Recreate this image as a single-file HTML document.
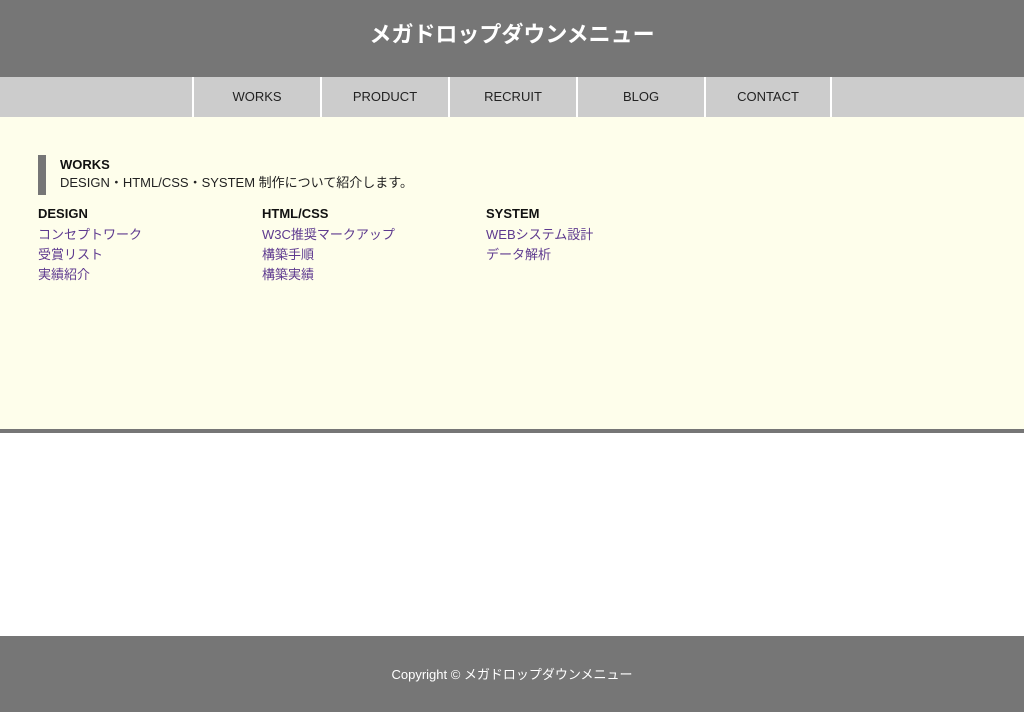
<!DOCTYPE html>
<html><head><meta charset="utf-8"><style>
*{margin:0;padding:0;box-sizing:border-box}
body{width:1024px;height:712px;background:#fff;font-family:"Liberation Sans","Noto Sans CJK JP",sans-serif;font-size:13px;color:#222;position:relative;overflow:hidden}
header{height:77px;background:#767676;color:#fff;text-align:center;font-size:22px;font-weight:bold;line-height:70px}
nav{height:40px;background:#ccc;position:relative}
nav a{position:absolute;top:0;width:128px;height:40px;line-height:40px;text-align:center;color:#222;text-decoration:none;font-size:13px;border-left:2px solid #fff}
nav a.last{border-right:2px solid #fff}
.panel{position:absolute;top:117px;left:0;width:1024px;height:316px;background:#fefeeb;border-bottom:4px solid #767676}
.lead{position:absolute;left:38px;top:38px;border-left:8px solid #767676;padding-left:14px;height:40px}
.lead b{display:block;font-size:13px;line-height:18px;margin-top:1px;color:#111}
.lead span{display:block;line-height:18px}
.col{position:absolute;top:88px}
.col b{display:block;line-height:18px;margin-bottom:2px;color:#111}
.col a{display:block;color:#5e3a8f;line-height:20px}
footer{position:absolute;top:636px;left:0;width:1024px;height:76px;background:#767676;color:#fff;text-align:center;line-height:78px;font-size:13px}
</style></head><body>
<header>メガドロップダウンメニュー</header>
<nav>
<a style="left:192px">WORKS</a>
<a style="left:320px">PRODUCT</a>
<a style="left:448px">RECRUIT</a>
<a style="left:576px">BLOG</a>
<a class="last" style="left:704px">CONTACT</a>
</nav>
<div class="panel">
<div class="lead"><b>WORKS</b><span>DESIGN・HTML/CSS・SYSTEM 制作について紹介します。</span></div>
<div class="col" style="left:38px"><b>DESIGN</b><a>コンセプトワーク</a><a>受賞リスト</a><a>実績紹介</a></div>
<div class="col" style="left:262px"><b>HTML/CSS</b><a>W3C推奨マークアップ</a><a>構築手順</a><a>構築実績</a></div>
<div class="col" style="left:486px"><b>SYSTEM</b><a>WEBシステム設計</a><a>データ解析</a></div>
</div>
<footer>Copyright © メガドロップダウンメニュー</footer>
</body></html>
